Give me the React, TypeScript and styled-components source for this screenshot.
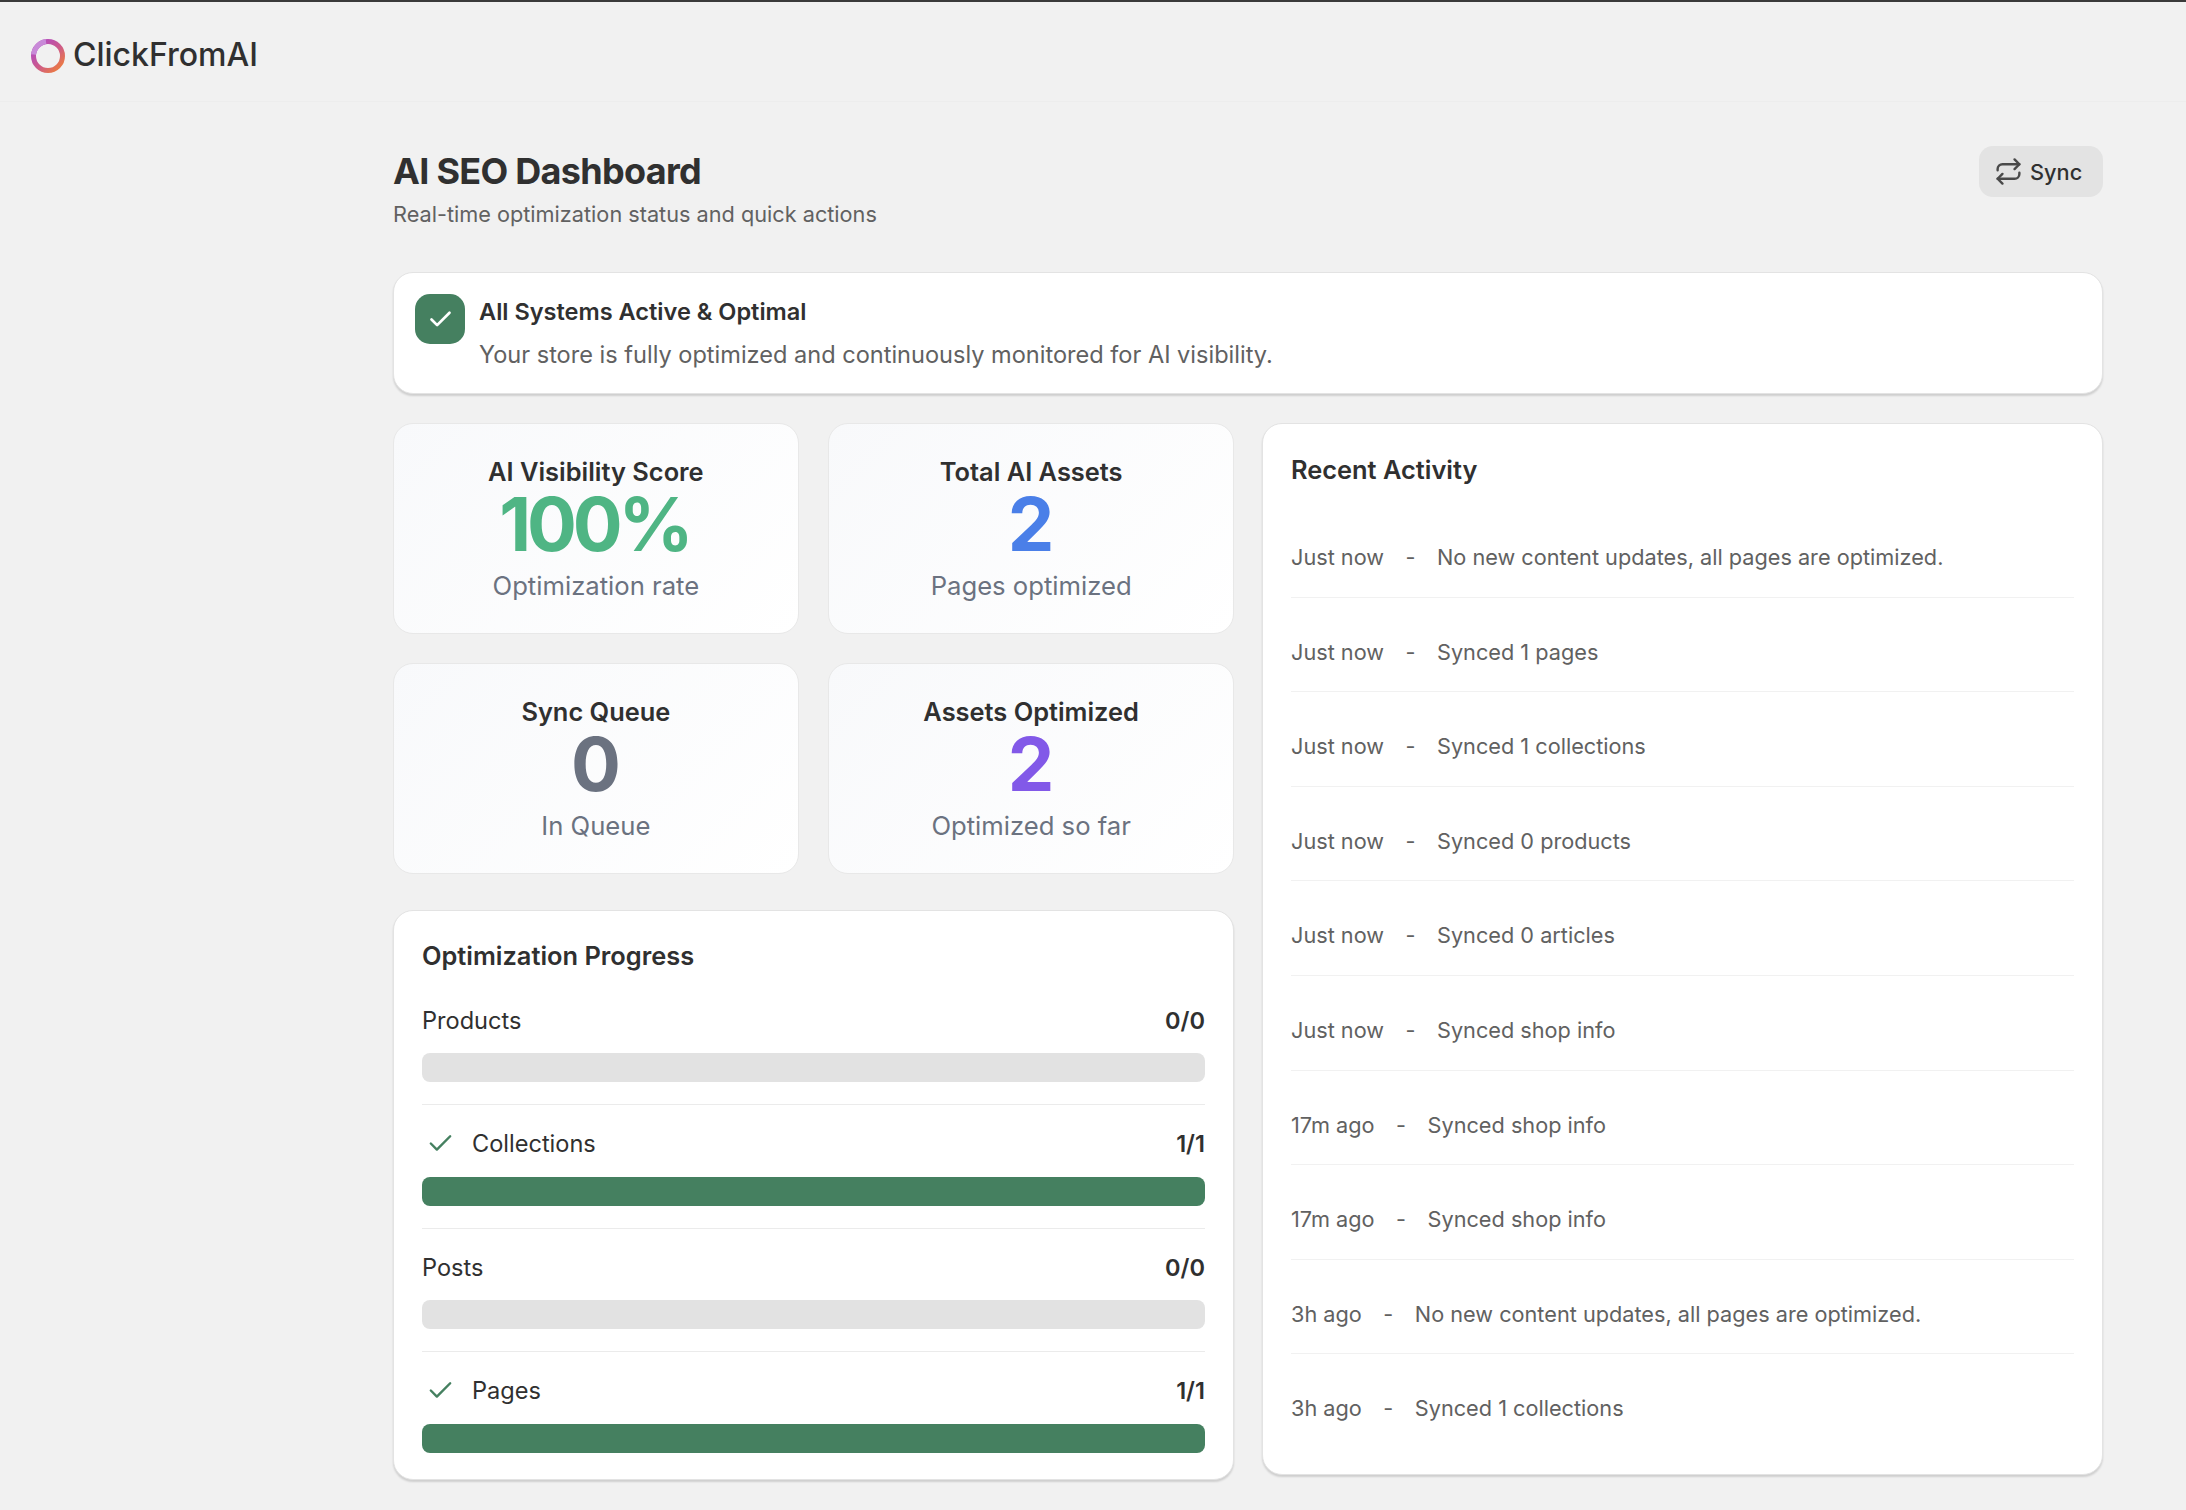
import React from "react"
import styled, { createGlobalStyle } from "styled-components"
import { Repeat, Check } from "lucide-react"

const GlobalStyle = createGlobalStyle`
    html, body {
        margin: 0;
        padding: 0;
        background: #f1f1f1;
        font-family: Inter, "Noto Sans", sans-serif;
        color: #303030;
    }
    * {
        box-sizing: border-box;
    }
`

const activity = [
    { time: "Just now", text: "No new content updates, all pages are optimized." },
    { time: "Just now", text: "Synced 1 pages" },
    { time: "Just now", text: "Synced 1 collections" },
    { time: "Just now", text: "Synced 0 products" },
    { time: "Just now", text: "Synced 0 articles" },
    { time: "Just now", text: "Synced shop info" },
    { time: "17m ago", text: "Synced shop info" },
    { time: "17m ago", text: "Synced shop info" },
    { time: "3h ago", text: "No new content updates, all pages are optimized." },
    { time: "3h ago", text: "Synced 1 collections" },
]

const stats = [
    { title: "AI Visibility Score", value: "100%", sub: "Optimization rate", color: "#4fb584" },
    { title: "Total AI Assets", value: "2", sub: "Pages optimized", color: "#4a7fe8" },
    { title: "Sync Queue", value: "0", sub: "In Queue", color: "#6b7280" },
    { title: "Assets Optimized", value: "2", sub: "Optimized so far", color: "#8259e8" },
]

const progress = [
    { label: "Products", count: "0/0", done: false },
    { label: "Collections", count: "1/1", done: true },
    { label: "Posts", count: "0/0", done: false },
    { label: "Pages", count: "1/1", done: true },
]

const Logo = () => (
    <svg width="36" height="36" viewBox="0 0 36 36" fill="none" strokeWidth="5">
        <defs>
            <linearGradient id="ring" x1="0.1" y1="0.1" x2="0.85" y2="0.9">
                <stop offset="0.15" stopColor="#b84fb4" />
                <stop offset="0.55" stopColor="#cc5a8c" />
                <stop offset="1" stopColor="#e8774a" />
            </linearGradient>
        </defs>
        <circle cx="18" cy="18" r="14.5" stroke="url(#ring)" />
        <path d="M3.6 16.5 A14.5 14.5 0 0 1 16 3.6" stroke="#c88ad8" />
    </svg>
)

const App = () => {
    return (
        <>
            <GlobalStyle />
            <Page>
                <Header>
                    <Logo />
                    <Brand>ClickFromAI</Brand>
                </Header>
                <Main>
                    <TitleRow>
                        <TitleBlock>
                            <Title>AI SEO Dashboard</Title>
                            <Subtitle>Real-time optimization status and quick actions</Subtitle>
                        </TitleBlock>
                        <SyncButton>
                            <Repeat size={29} strokeWidth={2} color="#4a4a4a" />
                            Sync
                        </SyncButton>
                    </TitleRow>
                    <Banner>
                        <BannerIcon>
                            <Check size={27} strokeWidth={2.4} color="#fff" />
                        </BannerIcon>
                        <div>
                            <BannerTitle>All Systems Active &amp; Optimal</BannerTitle>
                            <BannerText>Your store is fully optimized and continuously monitored for AI visibility.</BannerText>
                        </div>
                    </Banner>
                    <Columns>
                        <LeftColumn>
                            <StatGrid>
                                {stats.map((s) => (
                                    <StatCard key={s.title}>
                                        <StatTitle>{s.title}</StatTitle>
                                        <StatValue $color={s.color} $tight={s.value.length > 1}>{s.value}</StatValue>
                                        <StatSub>{s.sub}</StatSub>
                                    </StatCard>
                                ))}
                            </StatGrid>
                            <ProgressCard>
                                <CardTitle>Optimization Progress</CardTitle>
                                {progress.map((p) => (
                                    <ProgressItem key={p.label}>
                                        <ProgressHead>
                                            <ProgressLabel>
                                                {p.done && <Check size={29} strokeWidth={2} color="#458060" />}
                                                {p.label}
                                            </ProgressLabel>
                                            <ProgressCount>{p.count}</ProgressCount>
                                        </ProgressHead>
                                        <Bar $done={p.done} />
                                    </ProgressItem>
                                ))}
                            </ProgressCard>
                        </LeftColumn>
                        <ActivityCard>
                            <ActivityTitle>Recent Activity</ActivityTitle>
                            {activity.map((a, i) => (
                                <ActivityRow key={i}>
                                    <span>{a.time}</span>
                                    <span>-</span>
                                    <span>{a.text}</span>
                                </ActivityRow>
                            ))}
                        </ActivityCard>
                    </Columns>
                </Main>
            </Page>
        </>
    )
}

const Page = styled.div`
    min-height: 1510px;
    border-top: 2px solid #3a3a3a;
`

const Header = styled.header`
    height: 100px;
    padding: 36px 0 0 30px;
    display: flex;
    align-items: flex-start;
    gap: 7px;
    border-bottom: 1px solid #ededed;
`

const Brand = styled.div`
    font-size: 32px;
    line-height: 34px;
    font-weight: 500;
`

const Main = styled.main`
    padding: 44px 83px 0 393px;
`

const TitleRow = styled.div`
    display: flex;
    justify-content: space-between;
    align-items: flex-start;
    height: 126px;
`

const TitleBlock = styled.div`
    padding-top: 3px;
`

const Title = styled.h1`
    margin: 0;
    font-size: 36px;
    line-height: 44px;
    font-weight: 650;
    letter-spacing: -0.7px;
`

const Subtitle = styled.p`
    margin: 6px 0 0;
    font-size: 21.7px;
    line-height: 30px;
    color: #616161;
`

const SyncButton = styled.button`
    width: 124px;
    height: 51px;
    border: none;
    border-radius: 14px;
    background: #e3e3e3;
    color: #303030;
    font: 500 21.75px Inter, sans-serif;
    display: flex;
    align-items: center;
    gap: 7.5px;
    padding: 0 0 0 14.5px;
`

const Panel = styled.section`
    background: #fff;
    border: 1px solid #e3e3e3;
    border-radius: 20px;
    box-shadow: 0 2px 2px rgba(0, 0, 0, 0.14);
`

const Banner = styled(Panel)`
    height: 122px;
    padding: 21px 21px;
    display: flex;
    gap: 14px;
    align-items: flex-start;
`

const BannerIcon = styled.div`
    width: 50px;
    height: 50px;
    border-radius: 15px;
    background: #458060;
    display: flex;
    align-items: center;
    justify-content: center;
    flex-shrink: 0;
`

const BannerTitle = styled.div`
    font-size: 23.55px;
    line-height: 32px;
    font-weight: 600;
    margin-top: 2px;
`

const BannerText = styled.div`
    font-size: 23.55px;
    line-height: 32px;
    color: #616161;
    margin-top: 11px;
`

const Columns = styled.div`
    display: grid;
    grid-template-columns: 841px 841px;
    gap: 28px;
    align-items: start;
    margin-top: 29px;
`

const LeftColumn = styled.div`
    display: flex;
    flex-direction: column;
    gap: 36.5px;
`

const StatGrid = styled.div`
    display: grid;
    grid-template-columns: 1fr 1fr;
    gap: 29.5px;
`

const StatCard = styled.div`
    height: 210.5px;
    padding-top: 31.5px;
    border: 1px solid #e8e8e8;
    border-radius: 20px;
    background: linear-gradient(135deg, #f8f9fb, #ffffff);
    text-align: center;
`

const StatTitle = styled.div`
    font-size: 25.4px;
    line-height: 32px;
    font-weight: 600;
`

const StatValue = styled.div<{ $color: string; $tight: boolean }>`
    margin-top: 4px;
    padding-right: ${(p) => (p.$tight ? "3px" : "0")};
    font-size: 74px;
    line-height: 65px;
    font-weight: 700;
    letter-spacing: ${(p) => (p.$tight ? "-4.2px" : "0")};
    color: ${(p) => p.$color};
`

const StatSub = styled.div`
    margin-top: 13.5px;
    font-size: 25.65px;
    line-height: 32px;
    color: #6b7280;
`

const ProgressCard = styled(Panel)`
    height: 570px;
    padding: 28px 28px 0;
`

const CardTitle = styled.h2`
    margin: 0 0 8.5px;
    font-size: 25.4px;
    line-height: 34px;
    font-weight: 600;
`

const ProgressItem = styled.div`
    height: 123.5px;
    padding-top: 22.5px;
    border-bottom: 1px solid #ebebeb;

    &:last-child {
        border-bottom: none;
    }
`

const ProgressHead = styled.div`
    display: flex;
    justify-content: space-between;
    align-items: center;
    height: 32px;
    font-size: 23.55px;
`

const ProgressLabel = styled.div`
    display: flex;
    align-items: center;
    gap: 17px;

    svg {
        margin-left: 4px;
    }
`

const ProgressCount = styled.div`
    font-weight: 600;
`

const Bar = styled.div<{ $done: boolean }>`
    margin-top: 17px;
    height: 29px;
    border-radius: 8px;
    background: ${(p) => (p.$done ? "#458060" : "#e2e2e2")};
`

const ActivityCard = styled(Panel)`
    height: 1052px;
    padding: 29px 28px 0;
`

const ActivityTitle = styled(CardTitle)`
    margin-bottom: 16px;
`

const ActivityRow = styled.div`
    height: 94.6px;
    padding-top: 39px;
    display: flex;
    align-items: flex-start;
    gap: 21.5px;
    font-size: 21.7px;
    line-height: 30px;
    color: #616161;
    border-bottom: 1px solid #f1f1f1;

    &:last-child {
        border-bottom: none;
    }
`

export default App
